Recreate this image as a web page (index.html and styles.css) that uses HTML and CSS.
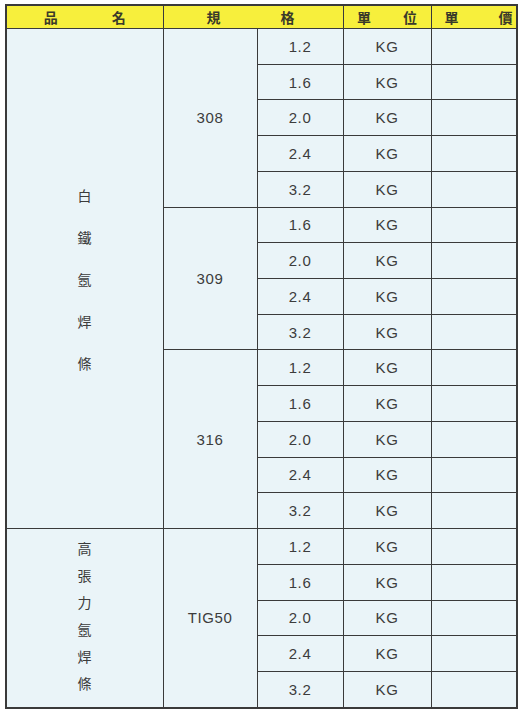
FILE: index.html
```html
<!DOCTYPE html>
<html>
<head>
<meta charset="utf-8">
<link rel="stylesheet" href="styles.css">
</head>
<body>
<table class="price">
  <colgroup>
    <col class="c-name"><col class="c-spec"><col class="c-size"><col class="c-unit"><col class="c-price">
  </colgroup>
  <thead>
    <tr>
      <th><span class="hd hd-name"><span>品</span><span>名</span></span></th>
      <th colspan="2"><span class="hd hd-spec"><span>規</span><span>格</span></span></th>
      <th><span class="hd hd-unit"><span>單</span><span>位</span></span></th>
      <th><span class="hd hd-price"><span>單</span><span>價</span></span></th>
    </tr>
  </thead>
  <tbody>
    <tr>
      <td rowspan="14" class="name"><div class="vert vert-wide"><span>白</span><span>鐵</span><span>氬</span><span>焊</span><span>條</span></div></td>
      <td rowspan="5" class="spec">308</td><td>1.2</td><td>KG</td><td></td>
    </tr>
    <tr><td>1.6</td><td>KG</td><td></td></tr>
    <tr><td>2.0</td><td>KG</td><td></td></tr>
    <tr><td>2.4</td><td>KG</td><td></td></tr>
    <tr><td>3.2</td><td>KG</td><td></td></tr>
    <tr><td rowspan="4" class="spec">309</td><td>1.6</td><td>KG</td><td></td></tr>
    <tr><td>2.0</td><td>KG</td><td></td></tr>
    <tr><td>2.4</td><td>KG</td><td></td></tr>
    <tr><td>3.2</td><td>KG</td><td></td></tr>
    <tr><td rowspan="5" class="spec">316</td><td>1.2</td><td>KG</td><td></td></tr>
    <tr><td>1.6</td><td>KG</td><td></td></tr>
    <tr><td>2.0</td><td>KG</td><td></td></tr>
    <tr><td>2.4</td><td>KG</td><td></td></tr>
    <tr><td>3.2</td><td>KG</td><td></td></tr>
    <tr>
      <td rowspan="5" class="name"><div class="vert vert-tight"><span>高</span><span>張</span><span>力</span><span>氬</span><span>焊</span><span>條</span></div></td>
      <td rowspan="5" class="spec">TIG50</td><td>1.2</td><td>KG</td><td></td>
    </tr>
    <tr><td>1.6</td><td>KG</td><td></td></tr>
    <tr><td>2.0</td><td>KG</td><td></td></tr>
    <tr><td>2.4</td><td>KG</td><td></td></tr>
    <tr><td>3.2</td><td>KG</td><td></td></tr>
  </tbody>
</table>
</body>
</html>
```
FILE: styles.css
```css
html, body {
  margin: 0;
  padding: 0;
  background: #ffffff;
}
body {
  padding: 4px 0 0 5px;
  font-family: "Liberation Sans", "Noto Sans CJK TC", sans-serif;
  color: #3c3c3c;
}
.price {
  border-collapse: collapse;
  table-layout: fixed;
  width: 513px;
  background: #eaf4f8;
  border: 2px solid #3a3a3a;
}
.c-name { width: 157px; }
.c-spec { width: 94px; }
.c-size { width: 86px; }
.c-unit { width: 88px; }
.c-price { width: 86px; }
.price th, .price td {
  border: 1.5px solid #3a3a3a;
  padding: 0;
  text-align: center;
  vertical-align: middle;
}
.price th {
  background: #f7ef3c;
  height: 22px;
  font-family: "Noto Sans CJK TC", sans-serif;
  font-size: 14px;
  font-weight: 700;
  color: #3a3a2a;
  line-height: 20px;
}
.hd {
  display: flex;
  justify-content: space-between;
  margin: 0 auto;
}
.hd-name { width: 82px; }
.hd-spec { width: 88px; margin-left: 43px; margin-right: auto; }
.hd-unit { width: 60px; }
.hd-price { width: 68px; margin-left: 13px; margin-right: auto; }
.price td {
  height: 34.72px;
  font-size: 15px;
  letter-spacing: 0.6px;
}
.vert {
  display: flex;
  flex-direction: column;
  align-items: center;
  font-family: "Noto Sans CJK TC", sans-serif;
  font-size: 14px;
  line-height: 18px;
}
.vert-wide { gap: 24px; margin-top: 0; }
.vert-tight { gap: 9px; margin-top: -5px; }
```
